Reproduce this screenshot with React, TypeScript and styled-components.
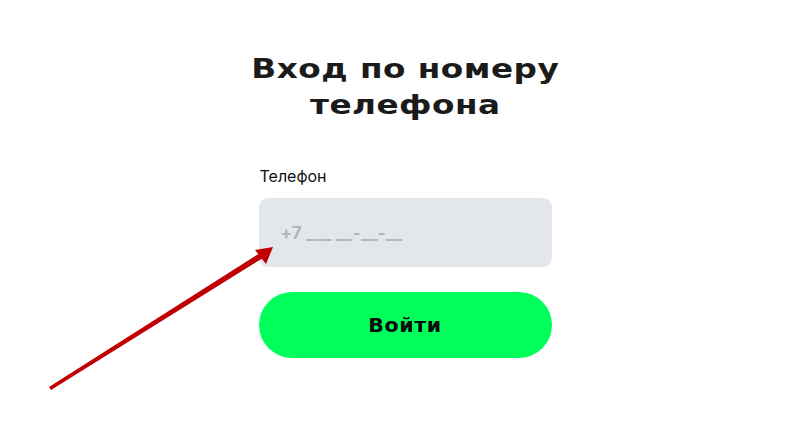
import styled, { createGlobalStyle } from "styled-components"

const GlobalStyle = createGlobalStyle`
  html, body {
    margin: 0;
    padding: 0;
    background: #ffffff;
  }
  body {
    font-family: "Inter", "Liberation Sans", sans-serif;
  }
`

const Page = styled.div`
  position: relative;
  width: 800px;
  height: 446px;
  overflow: hidden;
  display: flex;
  flex-direction: column;
  align-items: center;
  box-sizing: border-box;
  padding: 51px 0 0 10px;
`

const Title = styled.h1`
  margin: 0;
  font-family: "DejaVu Sans", sans-serif;
  font-weight: 700;
  font-size: 27px;
  line-height: 36px;
  letter-spacing: 0.4px;
  text-align: center;
  color: #1b1b1b;
  transform: scaleX(1.21);
`

const Form = styled.form`
  width: 293px;
  margin-top: 43px;
  display: flex;
  flex-direction: column;
`

const Label = styled.label`
  font-size: 16px;
  line-height: 20px;
  color: #111111;
  margin-bottom: 12px;
  padding-left: 1px;
`

const PhoneInput = styled.input`
  height: 69px;
  border: none;
  border-radius: 9px;
  background: #e3e6ea;
  padding: 0 22px;
  font-family: "Inter", "Liberation Sans", sans-serif;
  font-size: 17px;
  font-weight: 700;
  letter-spacing: 0.3px;
  color: #222;
  outline: none;

  &::placeholder {
    color: #b4b5b7;
  }
`

const SubmitButton = styled.button`
  margin-top: 25px;
  height: 66px;
  border: none;
  border-radius: 33px;
  background: #00ff5a;
  font-family: "DejaVu Sans", sans-serif;
  font-size: 19px;
  font-weight: 700;
  letter-spacing: 0.6px;
  color: #0a0a0a;
  cursor: pointer;
`

const ButtonText = styled.span`
  display: inline-block;
  transform: scaleX(1.08);
`

const ArrowLayer = styled.svg`
  position: absolute;
  left: 0;
  top: 0;
  width: 800px;
  height: 446px;
  pointer-events: none;
`

export default function App() {
  return (
    <>
      <GlobalStyle />
      <Page>
        <Title>
          Вход по номеру
          <br />
          телефона
        </Title>
        <Form onSubmit={(e) => e.preventDefault()}>
          <Label htmlFor="phone">Телефон</Label>
          <PhoneInput id="phone" type="tel" placeholder="+7 ___ __-__-__" />
          <SubmitButton type="submit">
            <ButtonText>Войти</ButtonText>
          </SubmitButton>
        </Form>
        <ArrowLayer viewBox="0 0 800 446">
          <polygon points="49,387 51,390 263,258 260,253" fill="#c00000" />
          <polygon points="273,247 255,250 266,264" fill="#c00000" />
        </ArrowLayer>
      </Page>
    </>
  )
}
